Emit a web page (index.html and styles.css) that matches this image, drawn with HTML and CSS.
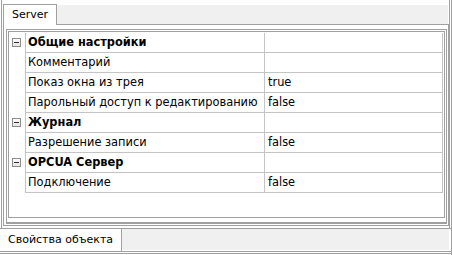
FILE: index.html
```html
<!DOCTYPE html>
<html lang="ru">
<head>
  <meta charset="UTF-8" />
  <title>Свойства объекта</title>
  <link rel="stylesheet" href="styles.css">
</head>
<body>

<div class="window">
  <div class="top">
    <div class="tabstrip">
      <div class="tab">Server</div>
      <div class="tab-rest"></div>
    </div>
    <div class="page">
      <div class="frame">
        <div class="grid">
          <div class="toggle"><span class="minus"></span></div>
          <div class="name category">Общие настройки</div>
          <div class="value"></div>

          <div class="margin"></div>
          <div class="name">Комментарий</div>
          <div class="value"></div>

          <div class="margin"></div>
          <div class="name">Показ окна из трея</div>
          <div class="value">true</div>

          <div class="margin"></div>
          <div class="name">Парольный доступ к редактированию</div>
          <div class="value">false</div>

          <div class="toggle"><span class="minus"></span></div>
          <div class="name category">Журнал</div>
          <div class="value"></div>

          <div class="margin"></div>
          <div class="name">Разрешение записи</div>
          <div class="value">false</div>

          <div class="toggle"><span class="minus"></span></div>
          <div class="name category">OPCUA Сервер</div>
          <div class="value"></div>

          <div class="margin"></div>
          <div class="name">Подключение</div>
          <div class="value">false</div>
        </div>
      </div>
    </div>
  </div>

  <div class="bottom">
    <div class="tab">Свойства объекта</div>
    <div class="tab-rest"></div>
  </div>
</div>

</body>
</html>
```

FILE: styles.css
```css
body {
  margin: 0;
  background: #ffffff;
  font-family: "DejaVu Sans", Verdana, sans-serif;
  font-size: 11px;
  color: #000000;
}
.window {
  width: 451px;
  height: 255px;
  border-right: 1px solid #a0a0a0;
  display: flex;
  flex-direction: column;
}
.top {
  height: 228px;
  box-sizing: border-box;
  margin-left: 1px;
  margin-right: 1px;
  padding-left: 1px;
  border-left: 1px solid #a0a0a0;
  border-right: 1px solid #a0a0a0;
  display: flex;
  flex-direction: column;
}
.tabstrip {
  display: flex;
  padding-top: 4px;
}
.tab {
  padding: 0 8px 0 8px;
  line-height: 20px;
  background: #ffffff;
  border: 1px solid #a0a0a0;
  border-bottom: none;
  position: relative;
  z-index: 1;
}
.tab-rest {
  flex: 1;
  margin: 1px 1px 1px 0;
  background: #f0f0f0;
}
.page {
  height: 202px;
  box-sizing: border-box;
  border: 1px solid #a0a0a0;
  margin-top: -1px;
  padding: 4px 1px 0 2px;
}
.frame {
  height: 195px;
  box-sizing: border-box;
  border: 1px solid #a0a0a0;
  border-bottom-width: 2px;
  padding: 1px 1px 4px 1px;
}
.grid {
  height: 187px;
  box-sizing: border-box;
  border: 1px solid #a0a0a0;
  padding: 1px 1px 0 0;
  display: grid;
  grid-template-columns: 16px 240px 1fr;
  grid-auto-rows: 20px;
  align-content: start;
  font-size: 11.4px;
}
.margin,
.toggle {
  display: flex;
  align-items: center;
  justify-content: center;
}
.name,
.value {
  line-height: 19px;
  border-bottom: 1px solid #c4c4c4;
  white-space: nowrap;
  overflow: hidden;
}
.name {
  padding-left: 2px;
  border-left: 1px solid #c4c4c4;
  border-right: 1px solid #c4c4c4;
}
.value {
  padding-left: 3px;
  border-right: 1px solid #c4c4c4;
}
.category {
  font-weight: bold;
}
.minus {
  width: 7px;
  height: 7px;
  border: 1px solid #8d8d8d;
  background: linear-gradient(#ffffff, #e4e4e4);
  position: relative;
  margin: 0 1px 2px 0;
}
.minus::after {
  content: "";
  position: absolute;
  left: 1px;
  top: 3px;
  width: 5px;
  height: 1px;
  background: #2f2f2f;
}
.bottom {
  flex: 1;
  display: flex;
  border-top: 1px solid #a0a0a0;
  border-bottom: 3px double #a0a0a0;
  margin-bottom: 1px;
}
.bottom .tab {
  border: none;
  border-right: 1px solid #a0a0a0;
  padding: 0 8px 0 8px;
  line-height: 21px;
}
.bottom .tab-rest {
  margin: 0 2px 1px 0;
}
```
